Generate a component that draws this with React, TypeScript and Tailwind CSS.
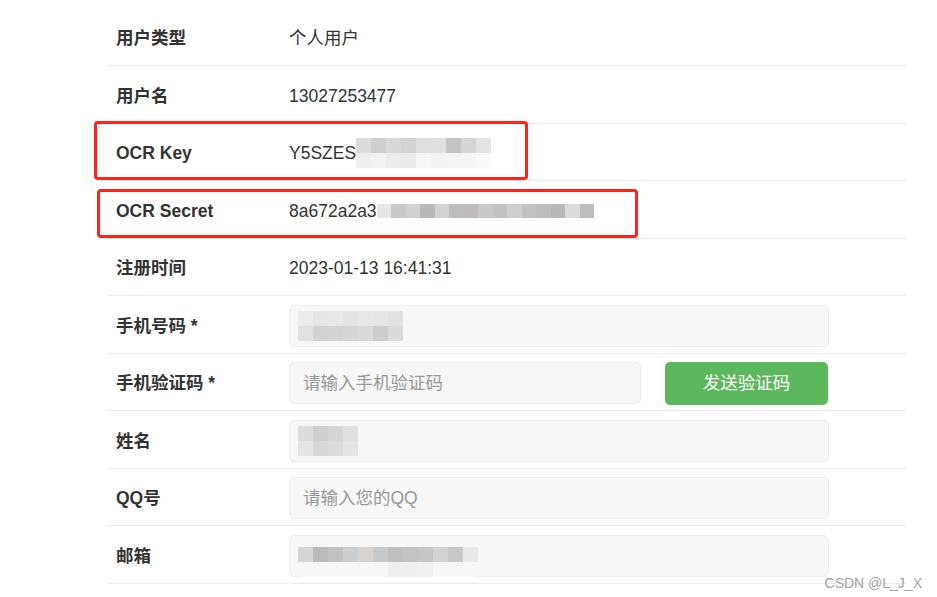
import React from 'react';

const font = { fontFamily: '"Liberation Sans", Arial, "Noto Sans CJK SC", sans-serif' };

// mosaic tiles used to hide the private values
const Mosaic: React.FC<{ rows: string[][]; tile?: number }> = ({ rows, tile = 15 }) => (
  <div className="flex flex-col">
    {rows.map((row, i) => (
      <div key={i} className="flex">
        {row.map((c, j) => (
          <div key={j} style={{ background: c, width: tile, height: tile }} />
        ))}
      </div>
    ))}
  </div>
);

const Row: React.FC<{ label: string; children: React.ReactNode }> = ({ label, children }) => (
  <div className="flex items-center h-[57.5px] pt-[3px] border-b border-[#ebebeb]">
    <div className="w-[172px] pl-[9px] font-bold text-[#333]">{label}</div>
    <div className="flex-1 pl-[10px] flex items-center">{children}</div>
  </div>
);

const Field: React.FC<{ placeholder?: string; width?: string; children?: React.ReactNode }> = ({
  placeholder,
  width = 'w-[540px]',
  children
}) => (
  <div
    className={`${width} h-[42px] rounded-[5px] border border-[#ececec] bg-[#f7f7f7] flex items-center px-[13px] text-[#999]`}
  >
    {children ?? placeholder}
  </div>
);

export default function App() {
  return (
    <div className="relative w-[937px] h-[597px] bg-white overflow-hidden text-[17.5px] text-[#333]" style={font}>
      <div className="ml-[107px] w-[799px] pt-[8.5px]">
        <Row label="用户类型">个人用户</Row>
        <Row label="用户名">13027253477</Row>
        <Row label="OCR Key">
          <span>Y5SZES</span>
          <Mosaic
            rows={[
              ['#dcdcdc', '#d0cfcf', '#d8d8da', '#d2d3d3', '#dfdfe0', '#e0e0e0', '#c4c4c4', '#d5d5d5', '#e3e3e3'],
              ['#eeeeee', '#f3f2f1', '#ececed', '#ebebeb', '#f6f6f6', '#f3f3f3', '#f4f4f4', '#f5f5f5', '#fafafa']
            ]}
          />
        </Row>
        <Row label="OCR Secret">
          <span>8a672a2a3</span>
          <Mosaic
            tile={14.5}
            rows={[
              ['#e6e6e6', '#cbc8c8', '#d0d0d2', '#b8b8b8', '#d2d2d2', '#bdbdbf', '#bebcbb', '#c8c8c8', '#c2c2c4', '#cfcfcf', '#c3c1c1', '#bdbdc0', '#b7b7b7', '#dcdcdc', '#bdbdbf']
            ]}
          />
        </Row>
        <Row label="注册时间">2023-01-13 16:41:31</Row>
        <Row label="手机号码 *">
          <Field>
            <div className="ml-[-5px]">
              <Mosaic
                rows={[
                  ['#ececec', '#e6e6e6', '#e8e8e8', '#e4e4e4', '#e8e8e8', '#e6e6e6', '#e2e2e2'],
                  ['#e1e1e1', '#d2d2d2', '#d3d3d3', '#d6d6d6', '#d9d9d9', '#cdcdcf', '#dadada']
                ]}
              />
            </div>
          </Field>
        </Row>
        <Row label="手机验证码 *">
          <Field width="w-[352px]" placeholder="请输入手机验证码" />
          <button className="ml-[24px] w-[163px] h-[43px] rounded-[5px] bg-[#5cb85c] text-white text-[17.5px]">
            发送验证码
          </button>
        </Row>
        <Row label="姓名">
          <Field>
            <div className="ml-[-5px]">
              <Mosaic
                rows={[
                  ['#dcdcdc', '#d0cfcf', '#d6d6d8', '#e0e0e0'],
                  ['#e4e4e4', '#d8d7d6', '#dcdcde', '#e4e4e4']
                ]}
              />
            </div>
          </Field>
        </Row>
        <Row label="QQ号">
          <Field placeholder="请输入您的QQ" />
        </Row>
        <Row label="邮箱">
          <Field>
            <div className="ml-[-5px] mt-[12px]">
              <Mosaic
                rows={[
                  ['#d6d6d6', '#bdbaba', '#c2c2c4', '#cbcdcf', '#d7d3d0', '#c8caca', '#bfc0c3', '#c3c3c5', '#c6c6c8', '#d2d2d2', '#c8c8c8', '#e8e9e9'],
                  ['#f7f7f7', '#f7f7f7', '#f7f7f7', '#f7f7f7', '#f7f7f7', '#f7f7f7', '#efefef', '#eeefef', '#f0f0f0', '#f7f7f7', '#f7f7f7', '#f7f7f7']
                ]}
              />
            </div>
          </Field>
        </Row>
      </div>

      {/* red annotation boxes */}
      <div className="absolute left-[94px] top-[121px] w-[434px] h-[59px] border-[3px] border-[#ff2318] rounded-[4px]" />
      <div className="absolute left-[97px] top-[189px] w-[541px] h-[49px] border-[3px] border-[#ff2318] rounded-[4px]" />

      <div className="absolute right-[15px] top-[573px] text-[14px] text-[#a3a3a3]">CSDN @L_J_X</div>
    </div>
  );
}
